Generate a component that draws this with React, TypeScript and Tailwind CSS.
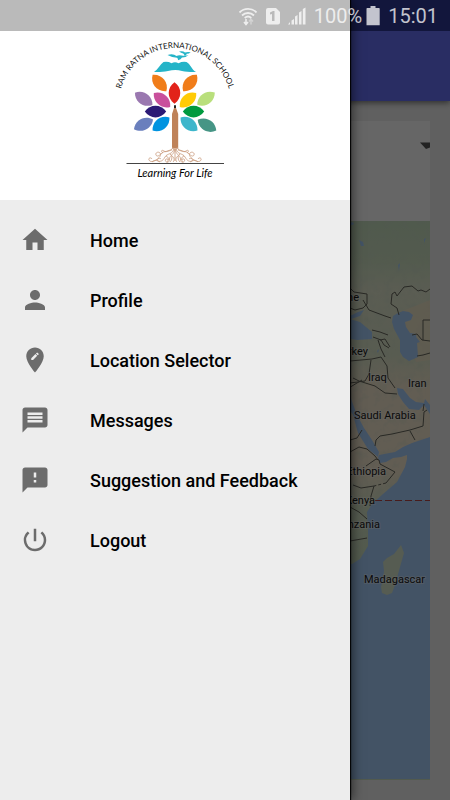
import React from "react";
import type { IconType } from "react-icons";
import {
    MdEditLocation,
    MdFeedback,
    MdHome,
    MdMessage,
    MdPerson,
    MdPowerSettingsNew,
} from "react-icons/md";

const MENU_ITEMS: { label: string; href: string; icon: IconType }[] = [
    { label: "Home", href: "#home", icon: MdHome },
    { label: "Profile", href: "#profile", icon: MdPerson },
    { label: "Location Selector", href: "#location", icon: MdEditLocation },
    { label: "Messages", href: "#messages", icon: MdMessage },
    { label: "Suggestion and Feedback", href: "#feedback", icon: MdFeedback },
    { label: "Logout", href: "#logout", icon: MdPowerSettingsNew },
];

// [center x, center y, rotation, color]
const LEAVES: [number, number, number, string][] = [
    [159.5, 83, 50, "#f07d1a"],
    [190, 83, -50, "#f07d1a"],
    [174.5, 93, 90, "#e2231a"],
    [143.7, 98.8, 35, "#9a78b0"],
    [162, 100, 40, "#c9509c"],
    [188, 100, -40, "#ffcb05"],
    [206, 98.7, -35, "#b9df7c"],
    [155.5, 111.6, 0, "#2b1a75"],
    [193.5, 111.6, 0, "#009a3e"],
    [143.5, 124.3, -27, "#6a7fbd"],
    [161, 124, -38, "#0093e0"],
    [189, 124, 38, "#3db6cb"],
    [207, 125.2, 30, "#469585"],
];

function SchoolLogo() {
    return (
        <svg viewBox="110 38 130 144" className="h-36 w-[130px]" role="img" aria-label="Ram Ratna International School">
            <path id="arc" d="M119 104 A56 56 0 0 1 231 104" fill="none" />
            <text fontSize="8" fill="#111" fontFamily="Lato, sans-serif">
                <textPath href="#arc" startOffset="50%" textAnchor="middle">
                    RAM RATNA INTERNATIONAL SCHOOL
                </textPath>
            </text>

            {/* Birds and hills */}
            <g fill="#25b4c8">
                <path d="M167.500 55q5.500-2 9 1 2-1.200 5-.6 4 .8 7-.4-3 2.800-6.500 2.600-1 2.200-4 2.600.200-1.500-1-2.400-4.500 0-9.500-2.800z" />
                <path d="M179 51.500q4-.8 6 .9 2-.6 5.700-.2-2 1.800-4 1.600 0 1.500-2 2.200-.5-1.800-1.500-2.600-2-.200-4.200-1.900z" />
                <path d="M154 72c4-2.500 6-7.500 9.500-10q4.500-.8 8 1.200 3.500-1.800 7 0 4-2 8-1.200c4 2 5 7.500 9.500 10-5 .3-10-.4-14-1.100q-7-1.800-14 .2c-5 .8-9 1.200-14 .9z" />
            </g>

            {LEAVES.map(([x, y, angle, color]) => (
                <path
                    key={`${x}-${y}`}
                    d="M-10.700 0C-5.500-7.700 5.500-7.700 10.700 0C5.500 7.700-5.500 7.700-10.700 0z"
                    fill={color}
                    transform={`translate(${x} ${y}) rotate(${angle})`}
                />
            ))}

            {/* Pencil trunk */}
            <path d="M172 114l2-6h2l2.200 6v34.500H172z" fill="#bf8259" />
            <path d="M174 108v-2.500l1-.5 1 .5v2.500z" fill="#222" />

            {/* Roots */}
            <g fill="none" stroke="#c99b7c" strokeWidth=".8">
                <path d="M173 147c-2 6-8 3-11 6s-5 4-6 2 2-4 4-2-1 5-4 7-6 2-7 0 2-3 3-1" />
                <path d="M177 147c2 6 8 3 11 6s5 4 6 2-2-4-4-2 1 5 4 7 6 2 7 0-2-3-3-1" />
                <path d="M174 148c-1 7-7 5-9 9s-5 5-7 4 1-4 3-2M176 148c1 7 7 5 9 9s5 5 7 4-1-4-3-2" />
                <path d="M174.500 149c0 6-5 6-5 10s-3 4-4 2 2-3 3-1M175.500 149c0 6 5 6 5 10s3 4 4 2-2-3-3-1" />
                <path d="M175 149v12M172 150c-5 0-5 3-8 1s-3 1-1 2M178 150c5 0 5 3 8 1s3 1 1 2" />
                <path d="M170 154c3 2 2 6 0 8M180 154c-3 2-2 6 0 8M166 156c3 1 3 4 1 6M184 156c-3 1-3 4-1 6" />
                <path d="M172 156c2 1 3 4 1 6M178 156c-2 1-3 4-1 6M152 162c3-3 6-1 8 0M198 162c-3-3-6-1-8 0" />
            </g>
            <path d="M126.500 163.500h97.500" stroke="#444" strokeWidth="1" />
            <text
                x="175"
                y="177"
                textAnchor="middle"
                fontSize="11"
                fontStyle="italic"
                fill="#000"
                fontFamily="Lato, sans-serif"
            >
                Learning For Life
            </text>
        </svg>
    );
}

function RegionMap() {
    return (
        <svg
            viewBox="20 221 410 559"
            preserveAspectRatio="xMaxYMin slice"
            className="min-h-0 w-full flex-1"
            role="img"
            aria-label="Map"
        >
            <defs>
                <linearGradient id="land" x1="0" y1="221" x2="0" y2="570" gradientUnits="userSpaceOnUse">
                    <stop offset="0" stopColor="#c8e0c0" />
                    <stop offset=".12" stopColor="#d0e3c4" />
                    <stop offset=".2" stopColor="#e3e8cf" />
                    <stop offset=".38" stopColor="#dce6ca" />
                    <stop offset=".48" stopColor="#f6e9d0" />
                    <stop offset=".72" stopColor="#f6e9d0" />
                    <stop offset=".82" stopColor="#d8e6c8" />
                    <stop offset="1" stopColor="#cde2c2" />
                </linearGradient>
                <filter id="terrain" x="0" y="0" width="1" height="1">
                    <feTurbulence type="fractalNoise" baseFrequency=".12" numOctaves="3" seed="4" />
                    <feColorMatrix values="0 0 0 0 .6  0 0 0 0 .7  0 0 0 0 .58  2.500 0 0 0 -1.100" />
                </filter>
            </defs>
            <rect x="20" y="221" width="410" height="560" fill="url(#land)" />
            <rect x="340" y="221" width="90" height="350" filter="url(#terrain)" opacity=".35" />
            <path d="M400 312l30-12v60l-14 2z" fill="#f3e4c8" opacity=".7" />

            <g fill="#a8cffd">
                <path d="M430 437l-9 3-9 3-9 4-8 5-16 3-1 3 2 5 6-1 7-4 8-1 6-2v4l-2 8-8 15-14 12-11 10-5 8 1 17v17l-8 13-8 5-332 5v210h410z" />
                <path d="M340 380l10 16 7 19 7 13 8 12 7 12-1 5-10-8-10-16-5-18-13-20z" />
                <path d="M397 388l6 1 7 9 6 4 8 1 1-4 5 6v9l-6-9-5 5-10-1-6-7-5-8z" />
                <path d="M393 316l5-3 5-2 6 1 4 3-2 5-6 2 1 5 4 6 6 1 1 8 1 15-9 4-6-4-3-5v-12l-6-11-2-7z" />
                <path d="M412 337l5 1 3 4-3 1-5-1z" />
                <path d="M340 318l10 1 10 3 12 10v7l-15 1-17-3zM340 316l12-1 6-3 6-2-4 6-9 3z" />
                <path d="M359 240l4 2 1 4-3 0zM351 222l3 1-1 2h-3zM424 239l2-1-2 5zM398 265l2-2-1 8z" />
                <path d="M377 351l2-2-1 4zM340 362l11-2v15h-11z" />
            </g>

            {/* Madagascar */}
            <path
                d="M401 545l3 8-4 14-5 18-3 8-5 2-5-2-1-6 2-8 1-8-1-9 4-4 7-4z"
                fill="#d6e6cc"
            />

            <g fill="none" stroke="#66665c" strokeWidth="1">
                <path d="M350 288l4 4 13 2v10l-4 4-8 2-5-2" />
                <path d="M399 315l-2-7-6-4 1-10 3-2 2 4 7-9 8-1 6 5 3-1 5 2 4-3M423 340v-20h7M412 335l5-1 5 6 8 1M417 356l6-1 7-2" />
                <path d="M363 300l6 10 16 6 6 2M372 330l8 2 8 3M373 337l8 3 3 5 5 3M380 340l5-1 5 8M378 340l3 9 4 8" />
                <path d="M350 361l22-2 9-2 6 9 1 12 7 10M371 360l-2 14-4 7-15 2M353 378l6 3 16 5 10 7 12 1M340 393l12-7 10-6" />
                <path d="M375 446l1-6 4-4 12-2 9-2 9-2 13-4 1-14 3-2M410 431l5 9M423 411l1-7" />
                <path d="M350 452l9-5 8 2 8 7 3 4M350 440l7-2 5-8M366 466l10-7 3 1 1 4 15 8-9 11M353 485l8 3 13-2M374 486l-3 10-1 10M350 507l9 5 8 7M350 541l17-3" />
                <path d="M386 483l-12 3" strokeDasharray="3 2" />
            </g>
            <path d="M375 500.500h55" stroke="#b44848" strokeWidth="1" strokeDasharray="7 3" />

            <g
                fontFamily="Roboto, sans-serif"
                fontSize="11"
                fill="#1c1c1c"
                stroke="#fff"
                strokeOpacity=".4"
                strokeWidth="2"
                paintOrder="stroke"
            >
                <text x="359" y="301" textAnchor="end">Ukraine</text>
                <text x="368" y="355" textAnchor="end">Turkey</text>
                <text x="368" y="381">Iraq</text>
                <text x="408" y="387">Iran</text>
                <text x="354" y="419">Saudi Arabia</text>
                <text x="386" y="475" textAnchor="end">Ethiopia</text>
                <text x="375" y="504" textAnchor="end">Kenya</text>
                <text x="380" y="528" textAnchor="end">Tanzania</text>
                <text x="364" y="583">Madagascar</text>
            </g>
        </svg>
    );
}

function StatusBar() {
    return (
        <div className="absolute inset-x-0 top-0 z-30 flex h-[31px] items-center justify-end pr-3 text-xl text-white/75">
            <svg viewBox="0 0 20 20" className="mr-2 size-5" fill="none" stroke="currentColor" strokeWidth="1.8" aria-hidden="true">
                <path d="M1.500 6.500a12 12 0 0 1 17 0M4 9.500a8.500 8.500 0 0 1 12 0M6.700 12a5 5 0 0 1 6.600 0" />
                <path d="M8 13v5M6 16l2 2.500 2-2.500" strokeWidth="1.600" />
                <path d="M13 18.500v-5M11 15.500l2-2.500 2 2.500" strokeWidth="1.400" opacity=".5" />
            </svg>
            <svg viewBox="0 0 14 18" className="mr-2 h-[18px] w-3.5" fill="currentColor" aria-hidden="true">
                <path
                    fillRule="evenodd"
                    d="M2 1h8l4 4v10.500a2 2 0 0 1-2 2H2a2 2 0 0 1-2-2V3a2 2 0 0 1 2-2zM7 4L4 5.500v2L6 7v7h2.500V4z"
                />
            </svg>
            <svg viewBox="0 0 18 18" className="mr-2 size-[18px]" fill="currentColor" aria-hidden="true">
                <path d="M0 17.500l2-2.500v2.500zM3.500 13.500L6 12v5.500H3.500zM7 9.500L9.500 8v9.500H7zM11 5.500L13.500 4v13.500H11zM14.800 2L17.500.5v17h-2.700z" />
            </svg>
            <span>100%</span>
            <svg viewBox="0 0 14 20" className="mx-1 h-5 w-3.5" fill="currentColor" aria-hidden="true">
                <path d="M4.500 0h5v2H13a.7.7 0 0 1 .7.7v16.600H.5V2.700A.7.7 0 0 1 1.200 2h3.300z" />
            </svg>
            <span className="pl-1">15:01</span>
        </div>
    );
}

function NavigationDrawer() {
    return (
        <aside className="absolute inset-y-0 left-0 z-20 flex w-7/9 flex-col bg-[#ededed] shadow-[1px_0_1px_rgba(0,0,0,0.9),3px_0_10px_rgba(0,0,0,0.5)]">
            <div className="h-[31px] bg-[#bababa]" />
            <div className="flex justify-center bg-white pt-[7px] pb-[18px]">
                <SchoolLogo />
            </div>
            <nav className="py-2.5">
                <ul>
                    {MENU_ITEMS.map(({ label, href, icon: Icon }) => (
                        <li key={label}>
                            <a href={href} className="flex h-[60px] items-center gap-10 px-5 text-lg font-medium text-black">
                                <Icon className="size-[30px] shrink-0 text-[#6c6c6c]" />
                                <span className="pt-0.5">{label}</span>
                            </a>
                        </li>
                    ))}
                </ul>
            </nav>
        </aside>
    );
}

export default function App() {
    return (
        <div className="relative flex min-h-screen flex-col overflow-hidden bg-[#f0f0f0] font-['Roboto',sans-serif]">
            <header className="shadow-[0_2px_6px_rgba(0,0,0,0.5)]">
                <div className="h-[31px] bg-[#2d3796]" />
                <div className="h-[70px] bg-[#6870f8]" />
            </header>
            <main className="flex flex-1 flex-col p-5">
                <section className="flex flex-1 flex-col overflow-hidden bg-white">
                    <div className="flex h-[100px] items-start pt-2">
                        <select aria-label="Location" className="h-8 flex-1 appearance-none bg-transparent pl-4">
                            <option value=""></option>
                        </select>
                        <svg viewBox="0 0 10 32" className="h-8 w-2.5" aria-hidden="true">
                            <path d="M0 13.500h10v5L6 20z" fill="#555" />
                        </svg>
                    </div>
                    <RegionMap />
                </section>
            </main>

            <div className="absolute inset-0 z-10 bg-black/60" />
            <NavigationDrawer />
            <StatusBar />
        </div>
    );
}
